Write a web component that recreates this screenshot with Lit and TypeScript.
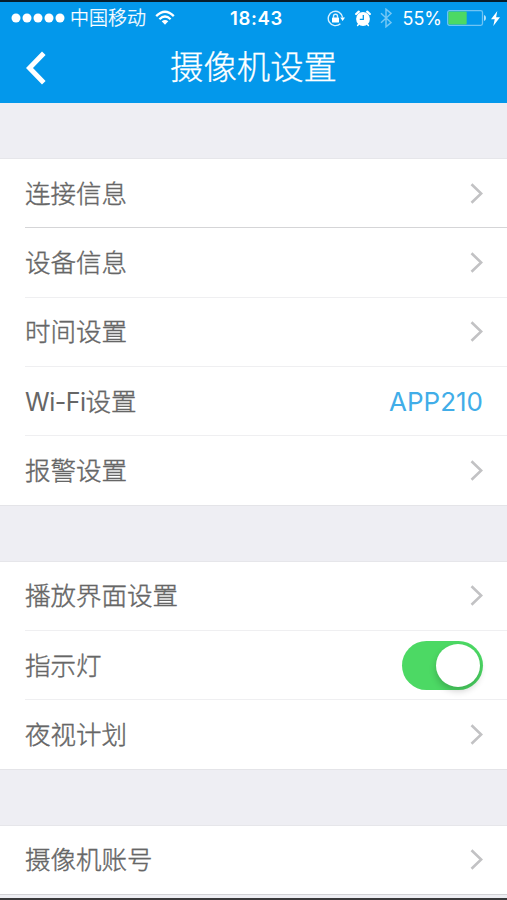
import { LitElement, html, css, svg, nothing } from "lit";
import { customElement, property } from "lit/decorators.js";

@customElement("status-bar")
class StatusBar extends LitElement {
  static styles = css`
    :host { display: grid; grid-template-columns: 1fr auto 1fr; align-items: center; height: 32px; padding: 0 7px 0 11px; color: #fff; }
    .side { display: flex; align-items: center; }
    .right { justify-content: flex-end; }
    svg { display: block; flex: none; }
    .carrier { font-size: 19px; line-height: 26px; margin: 0 9px 0 5px; padding-top: 2px; font-weight: 300; -webkit-text-stroke: 0.3px; white-space: nowrap; }
    .time { font: 600 18.5px/26px Inter, sans-serif; letter-spacing: 0.7px; position: relative; left: 1px; }
    .percent { font: 400 18px/26px Inter, sans-serif; margin: 0 5px 0 10px; padding-top: 1px; }
    .lock { margin-right: 10px; }
    .bt { margin-left: 9px; }
    .bolt { margin-left: 5px; }
  `;
  render() {
    return html`
      <div class="side">
        <svg width="54" height="10" fill="#fff">${[5, 16, 27, 38, 49].map((x) => svg`<circle cx=${x} cy="5" r="4.5"/>`)}</svg>
        <span class="carrier">中国移动</span>
        <svg width="20" height="16" viewBox="0 0 20 16" fill="none" stroke="#fff" stroke-width="2.3">
          <path d="M1.2 6.1Q10-2.7 18.8 6.1M4.4 9.3Q10 3.8 15.6 9.3"/><path d="M6.7 11.3Q10 8.5 13.3 11.3L10 14.8Z" fill="#fff" stroke="none"/>
        </svg>
      </div>
      <span class="time">18:43</span>
      <div class="side right">
        <svg class="lock" width="18" height="17" viewBox="0 0 18 17" fill="none" stroke="#d8f0ff" stroke-width="1.4">
          <path d="M15.6 7.5A7.2 7.2 0 1 0 13.4 13.7"/><path d="M13.2 7.6H18L15.6 11Z" fill="#fff" stroke="none"/>
          <rect x="5" y="7.4" width="7" height="5.2" rx=".7" fill="#fff" stroke="none"/><path d="M6.5 8V6.2a2 2 0 0 1 4 0V8"/>
        </svg>
        <svg width="16" height="17" viewBox="0 0 16 17">
          <circle cx="8" cy="9" r="6.9" fill="#fff"/><path d="M1.2 4 3.8 1.7M14.8 4 12.2 1.7" stroke="#fff" stroke-width="2.3" stroke-linecap="round"/><path d="M3.6 14.3 2.6 15.5M12.4 14.3 13.4 15.5" stroke="#fff" stroke-width="1.5" stroke-linecap="round"/>
          <path d="M8.3 5v4.4H4.8" fill="none" stroke="#0398eb" stroke-width="1.3"/>
        </svg>
        <svg class="bt" width="12" height="20" viewBox="0 0 12 20" fill="none" stroke="#75c7f5" stroke-width="1.5">
          <path d="M1 5.3 11 14.5 6 18.8V1.2L11 5.5 1 14.7"/>
        </svg>
        <span class="percent">55%</span>
        <svg width="39" height="16" viewBox="0 0 39 16">
          <rect x=".7" y=".7" width="34.8" height="14.6" rx="1.8" fill="none" stroke="#6fc4f4" stroke-width="1.3"/>
          <rect x="1.4" y="1.4" width="18.3" height="13.2" rx="1" fill="#4cd964"/><path d="M37 5q2 .7 2 3t-2 3z" fill="#b5e1fa"/>
        </svg>
        <svg class="bolt" width="9" height="15" viewBox="0 0 9 15"><path d="M6.3 0 0 8.3h3.7L2.3 15 9 6.3H5.1Z" fill="#fff"/></svg>
      </div>`;
  }
}

@customElement("settings-row")
class SettingsRow extends LitElement {
  static styles = css`
    :host { display: flex; height: 69.3px; padding-left: 25px; box-sizing: border-box; background: #fff; }
    :host(:last-of-type) { height: 68.3px; }
    .body { flex: 1; display: flex; align-items: center; justify-content: space-between; padding-right: 24px; border-bottom: 1px solid #efeff1; }
    :host([strong]) .body { border-bottom-color: #d5d5d7; }
    :host(:last-of-type) .body { border-bottom: 0; }
    .label { font-size: 25.5px; line-height: 36px; padding-top: 1px; font-weight: 300; -webkit-text-stroke: 0.4px #666; color: #666; white-space: nowrap; }
    .latin { font-weight: 400; font-size: 25px; letter-spacing: -0.5px; -webkit-text-stroke: 0; }
    .value { font-size: 26px; line-height: 36px; padding-top: 1px; color: #41ade8; }
    svg { display: block; }
    .switch { width: 81px; height: 49px; border-radius: 25px; background: #4cd964; padding: 3px; box-sizing: border-box; display: flex; justify-content: flex-end; }
    .knob { width: 44px; height: 43px; border-radius: 50%; background: #fff; box-shadow: 0 4px 7px rgba(0, 0, 0, 0.2); }
  `;
  @property() label = "";
  @property() latin = "";
  @property() value = "";
  @property({ type: Boolean }) toggle = false;
  render() {
    const end = this.toggle
      ? html`<div class="switch"><div class="knob"></div></div>`
      : this.value
        ? html`<span class="value">${this.value}</span>`
        : html`<svg width="13" height="21" viewBox="0 0 13 21"><path d="M1.5 1.2 11.2 10.5 1.5 19.8" fill="none" stroke="#c2c2c4" stroke-width="2.6"/></svg>`;
    return html`<div class="body"><span class="label">${this.latin ? html`<span class="latin">${this.latin}</span>` : nothing}${this.label}</span>${end}</div>`;
  }
}

type Item = { label: string; latin?: string; value?: string; toggle?: boolean; strong?: boolean };

const groups: Item[][] = [
  [
    { label: "连接信息", strong: true },
    { label: "设备信息" },
    { label: "时间设置" },
    { latin: "Wi-Fi", label: "设置", value: "APP210" },
    { label: "报警设置" },
  ],
  [{ label: "播放界面设置" }, { label: "指示灯", toggle: true }, { label: "夜视计划" }],
  [{ label: "摄像机账号" }],
];

@customElement("app-root")
class AppRoot extends LitElement {
  static styles = css`
    :host { display: flex; flex-direction: column; width: 507px; height: 900px; box-sizing: border-box; overflow: hidden; background: #eeeef3; border-top: 2px solid #071d2b; border-bottom: 2px solid #3a3a3c; font-family: Inter, "Noto Sans CJK SC", sans-serif; }
    header { flex: none; height: 100.5px; background: #0398eb; }
    .nav { display: grid; grid-template-columns: 60px 1fr 60px; align-items: center; height: 67px; color: #fff; }
    .back { display: block; margin-left: 25px; }
    h1 { margin: 0; font-size: 33.4px; line-height: 48px; padding-bottom: 2px; font-weight: 300; -webkit-text-stroke: 0.3px; text-align: center; }
    .list { display: flex; flex-direction: column; gap: 55.2px; padding-top: 55.6px; }
    .group { border-top: 1px solid #e6e6ea; border-bottom: 1px solid #e4e4e8; }
    .group:last-child { border-bottom-color: #d2d2d6; }
  `;
  render() {
    return html`
      <header>
        <status-bar></status-bar>
        <div class="nav">
          <svg class="back" width="22" height="34" viewBox="0 0 22 34"><path d="M18.8 2.2 4.5 17 18.8 31.8" fill="none" stroke="#fff" stroke-width="5"/></svg>
          <h1>摄像机设置</h1>
        </div>
      </header>
      <div class="list">
        ${groups.map((g) => html`<div class="group">${g.map((i) => html`<settings-row label=${i.label} latin=${i.latin ?? nothing} value=${i.value ?? nothing} ?toggle=${i.toggle} ?strong=${i.strong}></settings-row>`)}</div>`)}
      </div>`;
  }
}
